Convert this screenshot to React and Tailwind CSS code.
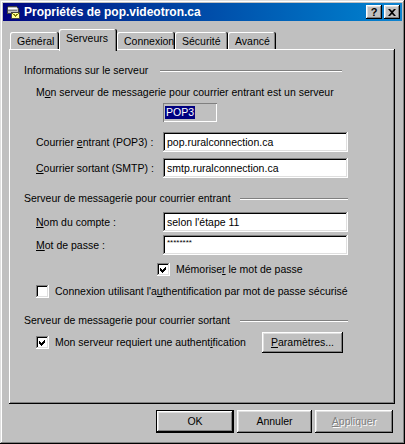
import React from 'react';

const raised =
  'shadow-[inset_-1px_-1px_0_#000,inset_1px_1px_0_#fff,inset_-2px_-2px_0_#808080,inset_2px_2px_0_#dfdfdf]';
const sunken =
  'shadow-[inset_-1px_-1px_0_#fff,inset_1px_1px_0_#808080,inset_-2px_-2px_0_#dfdfdf,inset_2px_2px_0_#000]';

const TitleIcon = () => (
  <svg width="16" height="16" viewBox="0 0 16 16" shapeRendering="crispEdges">
    <path d="M2 4 L4 2 H11 L13 4 V9 H2 Z" fill="#c0c0c0" stroke="#404040" strokeWidth="1" />
    <path d="M3 4 H12" stroke="#fff" />
    <path d="M3 6 H12" stroke="#808080" />
    <rect x="6.5" y="8.5" width="8" height="6" fill="#ffff99" stroke="#404040" />
    <path d="M7 9 L10.5 12 L14 9" fill="none" stroke="#808000" />
  </svg>
);

const TitleButton = ({ children }) => (
  <div className={`w-[16px] h-[14px] bg-[#c0c0c0] ${raised} flex items-center justify-center`}>
    {children}
  </div>
);

const Tab = ({ label, width, active }) => (
  <div
    className={
      active
        ? `relative z-10 h-[22px] -mb-[2px] bg-[#c0c0c0] rounded-t-[2px] shadow-[inset_-1px_0_0_#000,inset_1px_1px_0_#fff,inset_-2px_0_0_#808080] pl-[7px] pt-[2px] leading-[14px]`
        : `h-[17px] bg-[#c0c0c0] rounded-t-[2px] shadow-[inset_-1px_0_0_#000,inset_1px_1px_0_#fff,inset_-2px_0_0_#808080] pl-[7px] pt-[3px] leading-[13px]`
    }
    style={{ width }}
  >
    {label}
  </div>
);

const Heading = ({ children, width, line }) => (
  <div className="ml-[15px] h-[13px] flex items-center justify-between" style={{ width }}>
    <span className="leading-[13px]">{children}</span>
    <div className="h-[2px] border-t border-t-[#808080] border-b border-b-white" style={{ width: line }} />
  </div>
);

const Field = ({ value, small }) => (
  <div className={`w-[185px] h-[20px] bg-white ${sunken} pl-[4px] flex items-center`}>
    <span className={small ? 'text-[8px] leading-[8px] -mt-[4px]' : 'leading-[13px]'}>{value}</span>
  </div>
);

const FieldRow = ({ label, value, small, className = '' }) => (
  <div className={`flex items-center pl-[27px] ${className}`}>
    <div className="w-[127px] leading-[13px]">{label}</div>
    <Field value={value} small={small} />
  </div>
);

const Checkbox = ({ checked }) => (
  <div className={`w-[13px] h-[13px] bg-white ${sunken} shrink-0`}>
    {checked && (
      <svg width="13" height="13" viewBox="0 0 13 13" shapeRendering="crispEdges">
        <path d="M3 5 L5 7 L9 3 V6 L5 10 L3 8 Z" fill="#000" />
      </svg>
    )}
  </div>
);

const Button = ({ children, width, isDefault, disabled }) => (
  <div
    className={`h-[23px] flex items-center justify-center bg-[#c0c0c0] ${
      isDefault
        ? 'border border-black shadow-[inset_-1px_-1px_0_#000,inset_1px_1px_0_#fff,inset_-2px_-2px_0_#808080,inset_2px_2px_0_#dfdfdf]'
        : raised
    } ${disabled ? 'text-[#808080] [text-shadow:1px_1px_0_#fff]' : ''}`}
    style={{ width }}
  >
    {children}
  </div>
);

export default function App() {
  return (
    <div className="w-[405px] h-[444px] bg-[#c0c0c0] p-[3px] shadow-[inset_-1px_-1px_0_#000,inset_1px_1px_0_#dfdfdf,inset_-2px_-2px_0_#808080,inset_2px_2px_0_#fff] font-['Liberation_Sans',Arial,sans-serif] text-[10.5px] text-black select-none">
      {/* title bar */}
      <div className="h-[18px] flex items-center bg-linear-to-r from-[#000080] to-[#1084d0] pl-[2px] pr-[2px]">
        <TitleIcon />
        <span className="ml-[3px] text-white font-bold text-[12px] leading-[14px]">
          Propriétés de pop.videotron.ca
        </span>
        <div className="ml-auto flex gap-[2px]">
          <TitleButton>
            <span className="font-bold text-[11px] leading-[11px]">?</span>
          </TitleButton>
          <TitleButton>
            <svg width="8" height="7" viewBox="0 0 8 7">
              <path d="M0 0h2l2 2 2-2h2l-3 3.5 3 3.5h-2l-2-2-2 2h-2l3-3.5z" fill="#000" />
            </svg>
          </TitleButton>
        </div>
      </div>

      {/* tabs */}
      <div className="mt-[8px] h-[20px] pl-[7px] flex items-end">
        <Tab label="Général" width={49} />
        <Tab label="Serveurs" width={58} active />
        <Tab label="Connexion" width={58} />
        <Tab label="Sécurité" width={53} />
        <Tab label="Avancé" width={48} />
      </div>

      {/* panel */}
      <div className="ml-[6px] w-[386px] h-[355px] shadow-[inset_-1px_-1px_0_#000,inset_1px_1px_0_#fff,inset_-2px_-2px_0_#808080] pt-[15px]">
        <Heading width={318} line={182}>Informations sur le serveur</Heading>

        <div className="mt-[9px] pl-[27px] leading-[13px]">
          M<u>o</u>n serveur de messagerie pour courrier entrant est un serveur
        </div>

        <div className="mt-[4px] ml-[154px] w-[54px] h-[19px] shadow-[inset_1px_1px_0_#808080,inset_-1px_-1px_0_#fff] pl-[2px] flex items-center">
          <span className="bg-[#000080] text-white leading-[13px] px-[1px]">POP3</span>
        </div>

        <FieldRow
          className="mt-[10px]"
          label={<>Courrier <u>e</u>ntrant (POP3) :</>}
          value="pop.ruralconnection.ca"
        />
        <FieldRow
          className="mt-[6px]"
          label={<><u>C</u>ourrier sortant (SMTP) :</>}
          value="smtp.ruralconnection.ca"
        />

        <div className="mt-[14px]">
          <Heading width={324} line={108}>Serveur de messagerie pour courrier entrant</Heading>
        </div>

        <FieldRow className="mt-[7px]" label={<><u>N</u>om du compte :</>} value="selon l'étape 11" />
        <FieldRow className="mt-[3px]" label={<><u>M</u>ot de passe :</>} value="********" small />

        <div className="mt-[8px] ml-[148px] flex items-center gap-[6px]">
          <Checkbox checked />
          <span className="leading-[13px]">Mémorise<u>r</u> le mot de passe</span>
        </div>

        <div className="mt-[9px] ml-[27px] flex items-center gap-[6px]">
          <Checkbox />
          <span className="leading-[13px]">Connexion utilisant l'a<u>u</u>thentification par mot de passe sécurisé</span>
        </div>

        <div className="mt-[16px]">
          <Heading width={324} line={108}>Serveur de messagerie pour courrier sortant</Heading>
        </div>

        <div className="mt-[5px] ml-[27px] w-[307px] h-[21px] flex items-center">
          <Checkbox checked />
          <span className="ml-[6px] leading-[13px]">Mon serveur requiert une authent<u>i</u>fication</span>
          <div className={`ml-auto w-[81px] h-[21px] ${raised} flex items-center justify-center`}>
            <span><u>P</u>aramètres...</span>
          </div>
        </div>
      </div>

      {/* dialog buttons */}
      <div className="mt-[6px] pr-[9px] flex justify-end gap-[3px]">
        <Button width={78} isDefault>OK</Button>
        <Button width={75}>Annuler</Button>
        <Button width={78} disabled>
          <span><u>A</u>ppliquer</span>
        </Button>
      </div>
    </div>
  );
}
